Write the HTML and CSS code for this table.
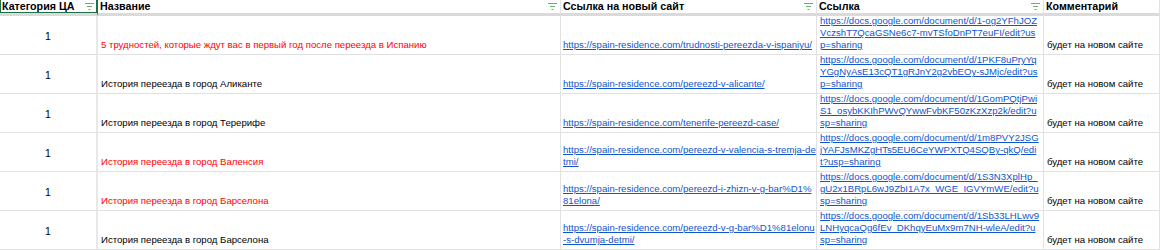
FILE: index.html
```html
<!DOCTYPE html>
<html>
<head>
<meta charset="utf-8">
<link rel="stylesheet" href="styles.css">
</head>
<body>
<div class="sheet">
  <div class="hcell hcell-a active"><span>Категория ЦА</span><svg class="filt" viewBox="0 0 9 7"><rect x="0" y="0" width="9" height="1"/><rect x="2" y="3" width="5" height="1"/><rect x="3.5" y="6" width="2" height="1"/></svg></div>
  <div class="hcell"><span>Название</span><svg class="filt" viewBox="0 0 9 7"><rect x="0" y="0" width="9" height="1"/><rect x="2" y="3" width="5" height="1"/><rect x="3.5" y="6" width="2" height="1"/></svg></div>
  <div class="hcell"><span>Ссылка на новый сайт</span><svg class="filt" viewBox="0 0 9 7"><rect x="0" y="0" width="9" height="1"/><rect x="2" y="3" width="5" height="1"/><rect x="3.5" y="6" width="2" height="1"/></svg></div>
  <div class="hcell"><span>Ссылка</span><svg class="filt" viewBox="0 0 9 7"><rect x="0" y="0" width="9" height="1"/><rect x="2" y="3" width="5" height="1"/><rect x="3.5" y="6" width="2" height="1"/></svg></div>
  <div class="hcell"><span>Комментарий</span></div>

  <div class="cell num">1</div>
  <div class="cell name red">5 трудностей, которые ждут вас в первый год после переезда в Испанию</div>
  <div class="cell link newsite"><a>https://spain-residence.com/trudnosti-pereezda-v-ispaniyu/</a></div>
  <div class="cell link doc"><a>https://docs.google.com/document/d/1-og2YFhJOZVczshT7QcaGSNe6c7-mvTSfoDnPT7euFI/edit?usp=sharing</a></div>
  <div class="cell note">будет на новом сайте</div>

  <div class="cell num">1</div>
  <div class="cell name">История переезда в город Аликанте</div>
  <div class="cell link newsite"><a>https://spain-residence.com/pereezd-v-alicante/</a></div>
  <div class="cell link doc"><a>https://docs.google.com/document/d/1PKF8uPryYqYGgNyAsE13cQT1gRJnY2g2vbEOy-sJMjc/edit?usp=sharing</a></div>
  <div class="cell note">будет на новом сайте</div>

  <div class="cell num">1</div>
  <div class="cell name">История переезда в город Терерифе</div>
  <div class="cell link newsite"><a>https://spain-residence.com/tenerife-pereezd-case/</a></div>
  <div class="cell link doc"><a>https://docs.google.com/document/d/1GomPQtjPwiS1_osybKKIhPWvQYwwFvbKF50zKzXzp2k/edit?usp=sharing</a></div>
  <div class="cell note">будет на новом сайте</div>

  <div class="cell num">1</div>
  <div class="cell name red">История переезда в город Валенсия</div>
  <div class="cell link newsite"><a>https://spain-residence.com/pereezd-v-valencia-s-tremja-detmi/</a></div>
  <div class="cell link doc"><a>https://docs.google.com/document/d/1m8PVY2JSGjYAFJsMKZgHTs5EU6CeYWPXTQ4SQBy-qkQ/edit?usp=sharing</a></div>
  <div class="cell note">будет на новом сайте</div>

  <div class="cell num">1</div>
  <div class="cell name red">История переезда в город Барселона</div>
  <div class="cell link newsite"><a>https://spain-residence.com/pereezd-i-zhizn-v-g-bar%D1%81elona/</a></div>
  <div class="cell link doc"><a>https://docs.google.com/document/d/1S3N3XplHp_gU2x1BRpL6wJ9ZbI1A7x_WGE_IGVYmWE/edit?usp=sharing</a></div>
  <div class="cell note">будет на новом сайте</div>

  <div class="cell num">1</div>
  <div class="cell name">История переезда в город Барселона</div>
  <div class="cell link newsite"><a>https://spain-residence.com/pereezd-v-g-bar%D1%81elonu-s-dvumja-detmi/</a></div>
  <div class="cell link doc"><a>https://docs.google.com/document/d/1Sb33LHLwv9LNHyqcaQg6fEv_DKhqyEuMx9m7NH-wleA/edit?usp=sharing</a></div>
  <div class="cell note">будет на новом сайте</div>
</div>
</body>
</html>
```
FILE: styles.css
```css
html, body {
  margin: 0;
  padding: 0;
  background: #ffffff;
}

.sheet {
  display: grid;
  grid-template-columns: 98px 463px 256px 227px 116px;
  grid-template-rows: 16px repeat(6, 39px);
  font-family: "Liberation Sans", Arial, sans-serif;
  font-size: 10px;
  line-height: 12px;
  color: #000000;
  width: 1160px;
}

.hcell {
  position: relative;
  box-sizing: border-box;
  display: flex;
  align-items: flex-start;
  justify-content: space-between;
  padding: 0 3px 0 2px;
  font-size: 10.7px;
  font-weight: bold;
  border-right: 1px solid #e2e2e2;
  border-bottom: 3px solid #dadada;
  white-space: nowrap;
  overflow: hidden;
}

.hcell span {
  line-height: 12px;
}

.hcell-a.active {
  box-shadow: inset -1px -1px 0 #1e7145, inset 1px 0 0 #1e7145;
  border-right-color: #1e7145;
}

.filt {
  width: 9px;
  height: 7px;
  margin-top: 3px;
  fill: #5cb85c;
  flex: none;
}

.cell {
  box-sizing: border-box;
  display: flex;
  align-items: flex-end;
  padding: 0 2px 3px 3px;
  border-right: 1px solid #e2e2e2;
  border-bottom: 1px solid #e2e2e2;
  overflow: hidden;
}

.cell.num {
  align-items: center;
  justify-content: center;
  padding: 2px 0 0 0;
  font-size: 10.5px;
  border-right: 2px solid #e8e8e8;
}

.cell.name {
  font-size: 9.6px;
}

.cell.note {
  font-size: 9.6px;
}

.cell.red {
  color: #ff0000;
}

.cell.newsite {
  padding-right: 0;
  padding-left: 2px;
}

.cell.doc {
  padding-right: 3px;
}

.cell.link a {
  font-size: 9.6px;
  color: #1155cc;
  text-decoration: underline;
  word-break: break-all;
}
```
